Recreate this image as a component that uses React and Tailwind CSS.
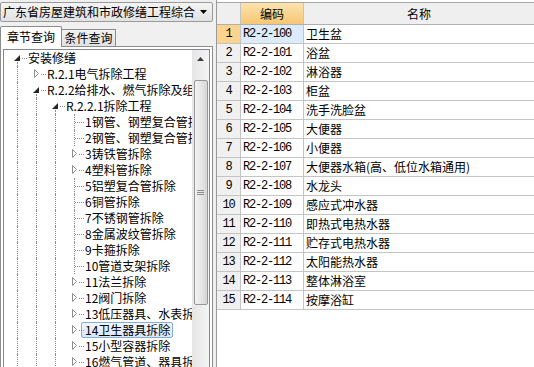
import React from 'react';

const items = [
  ['R2-2-100', '卫生盆'],
  ['R2-2-101', '浴盆'],
  ['R2-2-102', '淋浴器'],
  ['R2-2-103', '柜盆'],
  ['R2-2-104', '洗手洗脸盆'],
  ['R2-2-105', '大便器'],
  ['R2-2-106', '小便器'],
  ['R2-2-107', '大便器水箱(高、低位水箱通用)'],
  ['R2-2-108', '水龙头'],
  ['R2-2-109', '感应式冲水器'],
  ['R2-2-110', '即热式电热水器'],
  ['R2-2-111', '贮存式电热水器'],
  ['R2-2-112', '太阳能热水器'],
  ['R2-2-113', '整体淋浴室'],
  ['R2-2-114', '按摩浴缸'],
];

const tree = [
  { level: 0, text: '安装修缮', state: 'open' },
  { level: 1, text: 'R.2.1电气拆除工程', state: 'closed' },
  { level: 1, text: 'R.2.2给排水、燃气拆除及组装工程', state: 'open' },
  { level: 2, text: 'R.2.2.1拆除工程', state: 'open' },
  { level: 3, text: '1钢管、钢塑复合管拆除', state: 'leaf' },
  { level: 3, text: '2钢管、钢塑复合管拆除', state: 'leaf' },
  { level: 3, text: '3铸铁管拆除', state: 'closed' },
  { level: 3, text: '4塑料管拆除', state: 'closed' },
  { level: 3, text: '5铝塑复合管拆除', state: 'leaf' },
  { level: 3, text: '6铜管拆除', state: 'leaf' },
  { level: 3, text: '7不锈钢管拆除', state: 'leaf' },
  { level: 3, text: '8金属波纹管拆除', state: 'leaf' },
  { level: 3, text: '9卡箍拆除', state: 'leaf' },
  { level: 3, text: '10管道支架拆除', state: 'leaf' },
  { level: 3, text: '11法兰拆除', state: 'closed' },
  { level: 3, text: '12阀门拆除', state: 'closed' },
  { level: 3, text: '13低压器具、水表拆除', state: 'closed' },
  { level: 3, text: '14卫生器具拆除', state: 'closed', selected: true },
  { level: 3, text: '15小型容器拆除', state: 'closed' },
  { level: 3, text: '16燃气管道、器具拆除', state: 'closed' },
];

const NodeCell = ({ state }) => {
  if (state === 'leaf') {
    return (
      <div className="relative w-[19px] h-full shrink-0">
        <div className="absolute left-[9px] top-0 bottom-0 border-l border-dotted border-[#8a8a8a]" />
        <div className="absolute left-[10px] right-0 top-[8px] border-t border-dotted border-[#8a8a8a]" />
      </div>
    );
  }
  if (state === 'open') {
    return (
      <div className="relative w-[19px] h-full shrink-0">
        <div className="absolute left-[9px] top-[12px] bottom-0 border-l border-dotted border-[#8a8a8a]" />
        <div className="absolute left-[14px] right-0 top-[8px] border-t border-dotted border-[#8a8a8a]" />
        <svg width="6" height="6" className="absolute left-[6px] top-[5px]">
          <polygon points="6,0 6,6 0,6" fill="#262626" />
        </svg>
      </div>
    );
  }
  return (
    <div className="relative w-[19px] h-full shrink-0">
      <div className="absolute left-[14px] right-0 top-[8px] border-t border-dotted border-[#8a8a8a]" />
      <svg width="7" height="10" className="absolute left-[6px] top-[3px]">
        <polygon points="1.5,0.5 5.5,4.5 1.5,8.5" fill="#fff" stroke="#8e8e8e" />
      </svg>
    </div>
  );
};

const TreeRow = ({ node }) => (
  <div className="flex h-4 items-center whitespace-nowrap pl-[4px]">
    {Array.from({ length: node.level }).map((_, i) => (
      <div key={i} className="w-[19px] h-full shrink-0 pl-[9px]">
        <div className="h-full border-l border-dotted border-[#8a8a8a]" />
      </div>
    ))}
    <NodeCell state={node.state} />
    <span
      className={
        node.selected
          ? '-ml-[3px] h-4 leading-[14px] pl-[3px] pr-[2px] border border-[#84acdd] rounded-[2px] bg-gradient-to-b from-[#f2f8fe] to-[#d6e7fb]'
          : '-ml-[3px] h-4 leading-[14px] pl-[3px] pr-[2px] border border-transparent'
      }
    >
      {node.text}
    </span>
  </div>
);

const Scrollbar = () => (
  <div className="w-[17px] shrink-0 h-full bg-gradient-to-r from-[#e6e6e6] to-[#f4f4f4] flex flex-col items-center">
    <div className="h-[17px] w-full flex items-center justify-center">
      <svg width="7" height="4">
        <polygon points="3.5,0 7,4 0,4" fill="#3c3c3c" />
      </svg>
    </div>
    <div className="h-[13px]" />
    <div className="w-[14px] h-[225px] border border-[#979797] rounded-[2px] bg-gradient-to-r from-[#f3f3f3] via-[#e6e6e6] to-[#d6d6d6] flex flex-col items-center justify-center gap-[1px]">
      <div className="w-[7px] border-t border-[#8c8c8c]" />
      <div className="w-[7px] border-t border-[#8c8c8c]" />
      <div className="w-[7px] border-t border-[#8c8c8c]" />
    </div>
  </div>
);

export default function App() {
  return (
    <div className="w-[534px] h-[367px] overflow-hidden bg-[#f0f0f0] flex font-['Noto_Sans_CJK_SC','Liberation_Sans',sans-serif] text-[12px] text-black">
      {/* left panel */}
      <div className="w-[213px] shrink-0 flex flex-col">
        <div className="mt-[2px] h-[20px] border border-[#9a9a9a] rounded-[2px] bg-gradient-to-b from-[#f4f4f4] to-[#e2e2e2] flex items-center pl-[2px] pr-[5px]">
          <span className="flex-1 leading-[18px] whitespace-nowrap overflow-hidden">广东省房屋建筑和市政修缮工程综合</span>
          <svg width="7" height="4">
            <polygon points="0,0 7,0 3.5,4" fill="#000" />
          </svg>
        </div>
        <div className="mt-[3px] flex items-end h-[21px]">
          <div className="h-[21px] w-[62px] border border-b-0 border-[#8c8c8c] bg-white rounded-t-[2px] flex items-center justify-center leading-[18px] relative top-[1px] z-10">
            章节查询
          </div>
          <div className="h-[17px] w-[54px] border border-l-0 border-b-0 border-[#8c8c8c] bg-gradient-to-b from-[#f2f2f2] to-[#e1e1e1] flex items-center justify-center leading-[16px]">
            条件查询
          </div>
        </div>
        <div className="flex-1 border border-b-0 border-[#8c8c8c] bg-white pt-[2px] px-[2px] min-h-0">
          <div className="h-full border border-b-0 border-[#828790] flex overflow-hidden">
            <div className="flex-1 min-w-0 overflow-hidden">
              {tree.map((n, i) => (
                <TreeRow key={i} node={n} />
              ))}
            </div>
            <Scrollbar />
          </div>
        </div>
      </div>

      {/* splitter */}
      <div className="w-[3px] shrink-0" />

      {/* grid */}
      <div className="flex-1 border-l border-[#9a9a9a] bg-white flex flex-col pt-[2px]">
        <div className="border-t border-[#a6a6a6]" />
        <div className="flex h-[22px] border-b border-[#b0b0b0] bg-[#efefef]">
          <div className="w-[24px] shrink-0 border-r border-[#c4c4c4]" />
          <div className="w-[63px] shrink-0 border-r border-[#c4c4c4] bg-gradient-to-b from-[#fce3ad] to-[#f6c673] flex items-center justify-center leading-[20px]">
            编码
          </div>
          <div className="flex-1 flex items-center justify-center leading-[20px]">名称</div>
        </div>
        {items.map(([code, name], i) => (
          <div key={code} className="flex h-[19px] border-b border-[#c4c4c4]">
            <div
              className={
                i === 0
                  ? 'w-[24px] shrink-0 border-r border-[#c4c4c4] bg-[#fcd48d] flex items-center justify-center font-["Liberation_Mono",monospace] tracking-[-1.2px]'
                  : 'w-[24px] shrink-0 border-r border-[#c4c4c4] bg-[#f0f0f0] flex items-center justify-center font-["Liberation_Mono",monospace] tracking-[-1.2px]'
              }
            >
              {i + 1}
            </div>
            <div
              className={
                i === 0
                  ? 'w-[63px] shrink-0 border-r border-[#c4c4c4] bg-[#dcebfa] flex items-center pl-[2px] font-["Liberation_Mono",monospace] tracking-[-1.2px]'
                  : 'w-[63px] shrink-0 border-r border-[#c4c4c4] flex items-center pl-[2px] font-["Liberation_Mono",monospace] tracking-[-1.2px]'
              }
            >
              {code}
            </div>
            <div className="flex-1 flex items-center pl-[2px] whitespace-nowrap overflow-hidden leading-[18px]">{name}</div>
          </div>
        ))}
      </div>
    </div>
  );
}
